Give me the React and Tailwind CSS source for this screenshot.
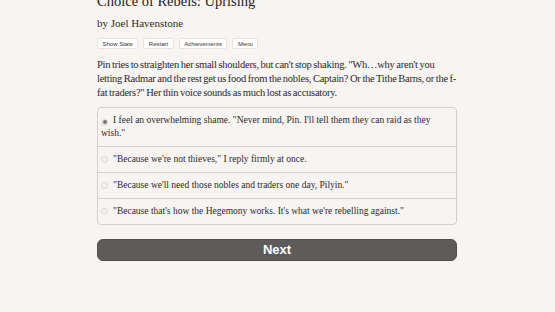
export default function App() {
  const options = [
    "I feel an overwhelming shame. \"Never mind, Pin. I'll tell them they can raid as they wish.\"",
    "\"Because we're not thieves,\" I reply firmly at once.",
    "\"Because we'll need those nobles and traders one day, Pilyin.\"",
    "\"Because that's how the Hegemony works. It's what we're rebelling against.\"",
  ];
  const serif = { fontFamily: '"Liberation Serif", "DejaVu Serif", serif' };

  return (
    <div className="w-[555px] h-[312px] overflow-hidden bg-[#f7f4f1] text-[#2b2b2b]" style={serif}>
      <div className="w-[360px] ml-[97px] -mt-[8px]">
        <h1 className="text-[14.5px] leading-[18px] text-[#222]">Choice of Rebels: Uprising</h1>
        <p className="mt-[6px] text-[11px] leading-[14px]">by Joel Havenstone</p>

        {/* top menu buttons */}
        <div className="mt-[8px] flex gap-[5px] font-['Liberation_Sans',sans-serif] text-[6px] text-[#333]">
          {["Show Stats", "Restart", "Achievements", "Menu"].map((b) => (
            <span
              key={b}
              className="px-[4.5px] h-[11px] leading-[11px] bg-white rounded-[2px] border border-[#e8e4e0]"
            >
              {b}
            </span>
          ))}
        </div>

        <p className="mt-[9px] text-[10.5px] leading-[14px] tracking-[-0.25px] [word-spacing:-0.6px] text-[#2a2a2a]">
          Pin tries to straighten her small shoulders, but can't stop shaking. "Wh…why aren't you letting Radmar and the rest get us food from the nobles, Captain? Or the Tithe Barns, or the f-{"\u200B"}fat traders?" Her thin voice sounds as much lost as accusatory.
        </p>

        {/* choices */}
        <div className="mt-[7px] border border-[#d3cfcb] rounded-[4px]">
          {options.map((o, i) => (
            <div
              key={i}
              className={`px-[3px] py-[6px] text-[9.5px] leading-[13px] ${
                i > 0 ? "border-t border-[#d3cfcb]" : ""
              }`}
            >
              <span className="inline-flex align-[-1px] mr-[5px] w-[7px] h-[7px] rounded-full border border-[#dcd8d4] bg-[#f3f1ef] items-center justify-center">
                {i === 0 && <span className="w-[4px] h-[4px] rounded-full bg-[#777573]" />}
              </span>
              {o}
            </div>
          ))}
        </div>

        <button className="mt-[14px] w-full h-[22px] rounded-[6px] bg-[#5e5c5a] text-white font-bold text-[13px] font-['Liberation_Sans',sans-serif] border border-[#4f4d4b]">
          Next
        </button>
      </div>
    </div>
  );
}
